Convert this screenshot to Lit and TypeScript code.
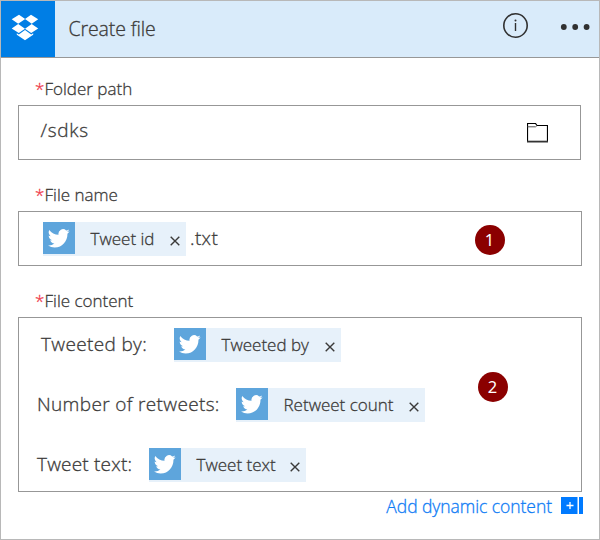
import { LitElement, html, css } from "lit";
import { customElement, property } from "lit/decorators.js";

@customElement("token-chip")
export class TokenChip extends LitElement {
  @property() label = "";

  static styles = css`
    :host {
      display: flex;
      flex: none;
      height: 34px;
      background: #e7f1fa;
      color: #3b3a39;
      box-sizing: border-box;
      letter-spacing: 0;
    }
    .icon {
      width: 32px;
      height: 32px;
      background: #5ea5dc;
      flex: none;
    }
    .icon svg {
      display: block;
      margin: 7px 0 0 5px;
    }
    .label {
      flex: 1;
      margin-left: 15.5px;
      font-size: 17px;
      line-height: 33px;
      white-space: nowrap;
    }
    .close {
      flex: none;
      margin: 14px 6px 0 0;
      width: 10px;
      height: 10px;
    }
  `;

  render() {
    return html`
      <div class="icon">
        <svg width="22" height="19" viewBox="0 0 24 20" preserveAspectRatio="none">
          <path
            fill="#fff"
            d="M23.6 2.4c-.9.4-1.8.6-2.8.8 1-.6 1.8-1.5 2.1-2.7-.9.6-2 1-3.1 1.2A4.9 4.9 0 0 0 11.5 6.1C7.4 5.9 3.8 4 1.4 1c-1.3 2.2-.7 5 1.5 6.5-.8 0-1.6-.2-2.2-.6 0 2.3 1.6 4.4 3.9 4.9-.7.2-1.5.2-2.2.1.6 1.9 2.4 3.3 4.6 3.4A9.9 9.9 0 0 1-.3 17.3 13.9 13.9 0 0 0 7.2 19.5c9.1 0 14.3-7.7 14-14.6 1-.7 1.8-1.6 2.4-2.5z"
          />
        </svg>
      </div>
      <span class="label">${this.label}</span>
      <svg class="close" viewBox="0 0 10 10">
        <path d="M.7.7l8.6 8.6M9.3.7L.7 9.3" stroke="#3b3a39" stroke-width="1.4" />
      </svg>
    `;
  }
}

@customElement("app-root")
export class AppRoot extends LitElement {
  static styles = css`
    :host {
      display: block;
      font-family: "Open Sans", "Noto Sans", sans-serif;
      font-weight: 300;
      color: #3b3a39;
      -webkit-text-stroke: 0.3px currentColor;
    }
    .card {
      position: relative;
      box-sizing: border-box;
      width: 600px;
      height: 540px;
      border: 1px solid #b8b8b8;
      background: #fff;
      overflow: hidden;
    }
    .header {
      display: flex;
      height: 56px;
      background: #d9ebfa;
      border-bottom: 1px solid #979797;
    }
    .logo {
      width: 54px;
      height: 56px;
      background: #007ee5;
      flex: none;
    }
    .logo svg,
    .actions svg {
      display: block;
    }
    .title {
      flex: 1;
      margin-left: 13.5px;
      font-size: 19.5px;
      line-height: 56px;
      letter-spacing: -0.12px;
      white-space: nowrap;
    }
    .actions {
      width: 98px;
      flex: none;
    }
    .body {
      padding: 0 17px;
    }
    .label {
      display: flex;
      height: 22px;
      margin: 20px 0 5px 17px;
      font-size: 17px;
      line-height: 22px;
      white-space: nowrap;
    }
    .label.next {
      margin-top: 24px;
    }
    .star {
      width: 9.5px;
      color: #ef3b4c;
    }
    .box {
      display: flex;
      align-items: flex-start;
      box-sizing: border-box;
      width: 564px;
      height: 55px;
      border: 1px solid #979797;
      font-size: 19px;
      letter-spacing: 0.35px;
    }
    .box.path {
      width: 563px;
    }
    .value {
      flex: 1;
      margin-left: 21.5px;
      line-height: 48px;
      letter-spacing: 0.7px;
    }
    .folder {
      margin: 17px 32px 0 0;
    }
    .box.content {
      flex-direction: column;
      height: 175px;
      padding: 10px 0 0 18px;
    }
    .row {
      display: flex;
      height: 34px;
      margin-bottom: 26px;
      line-height: 32px;
      white-space: nowrap;
    }
    .id { width: 143px; margin: 10px 0 0 24px; }
    .suffix { margin-left: 4px; line-height: 53px; }
    .by-text { width: 133px; padding-left: 4px; }
    .count-text { width: 199px; }
    .text-text { width: 112px; letter-spacing: 0.2px; }
    .by { width: 167px; }
    .count { width: 189px; }
    .text { width: 157px; }
    .footer {
      display: flex;
      justify-content: flex-end;
      margin-right: -1px;
      color: #0f7cf5;
      font-size: 17.5px;
      line-height: 28px;
      letter-spacing: -0.06px;
      white-space: nowrap;
    }
    .footer svg {
      margin: 5px 0 0 9px;
    }
    .badge {
      position: absolute;
      width: 30px;
      height: 30px;
      border-radius: 50%;
      background: #8b0000;
      color: #fff;
      font: 400 16.5px/29px "Noto Sans", sans-serif;
      -webkit-text-stroke: 0;
      text-align: center;
    }
    .one { left: 473.5px; top: 223.5px; }
    .two { left: 476.5px; top: 370.5px; }
  `;

  render() {
    return html`
      <div class="card">
        <div class="header">
          <div class="logo">
            <svg width="54" height="56" fill="#fff">
              <path d="M18 13.8l6.2 4.2-7 4.7-6.5-4.4zM30 13.8l7.2 4.4-6.5 4.5-6.7-4.7zM10.7 27.5l6.5-4.5 6.8 4.7-6.2 4.3zM37.2 27.5l-6.5-4.5-6.7 4.7 6.2 4.3zM24 29l6.2 4.4 2-1.2v1.6L24 39.3l-8.2-5.5v-1.6l2 1.2z" />
            </svg>
          </div>
          <div class="title">Create file</div>
          <div class="actions">
            <svg width="98" height="56" fill="#303030">
              <circle cx="14.5" cy="24.5" r="11.7" fill="none" stroke="#303030" stroke-width="1.6" />
              <path d="M13.8 22h1.4v8h-1.4z" />
              <circle cx="14.5" cy="19.5" r="1" />
              <circle cx="62.8" cy="26" r="2.9" />
              <circle cx="74.2" cy="26" r="2.9" />
              <circle cx="85.6" cy="26" r="2.9" />
            </svg>
          </div>
        </div>
        <div class="body">
          <div class="label"><span class="star">*</span><span>Folder path</span></div>
          <div class="box path">
            <span class="value">/sdks</span>
            <svg class="folder" width="21" height="20" fill="none" stroke="#000">
              <path d="M.5 18.5V.5h8l1.5 2h10.5v16.5" stroke-width="1.2" />
              <path d="M.5 3.8h8l1.5-1.3" stroke="#555" />
              <path d="M0 18.6h21" stroke-width="1.8" stroke="#333" />
            </svg>
          </div>
          <div class="label next"><span class="star">*</span><span>File name</span></div>
          <div class="box">
            <token-chip class="id" label="Tweet id"></token-chip>
            <span class="suffix">.txt</span>
          </div>
          <div class="label next"><span class="star">*</span><span>File content</span></div>
          <div class="box content">
            <div class="row">
              <span class="by-text">Tweeted by:</span>
              <token-chip class="by" label="Tweeted by"></token-chip>
            </div>
            <div class="row">
              <span class="count-text">Number of retweets:</span>
              <token-chip class="count" label="Retweet count"></token-chip>
            </div>
            <div class="row">
              <span class="text-text">Tweet text:</span>
              <token-chip class="text" label="Tweet text"></token-chip>
            </div>
          </div>
          <div class="footer">
            <span>Add dynamic content</span>
            <svg width="22" height="17">
              <path d="M0 0h16.5v17H0zM18 0h4v17h-4z" fill="#007aff" />
              <path d="M5.5 8.5h7M9 5v7" stroke="#fff" stroke-width="1.3" />
            </svg>
          </div>
        </div>
        <div class="badge one">1</div>
        <div class="badge two">2</div>
      </div>
    `;
  }
}
